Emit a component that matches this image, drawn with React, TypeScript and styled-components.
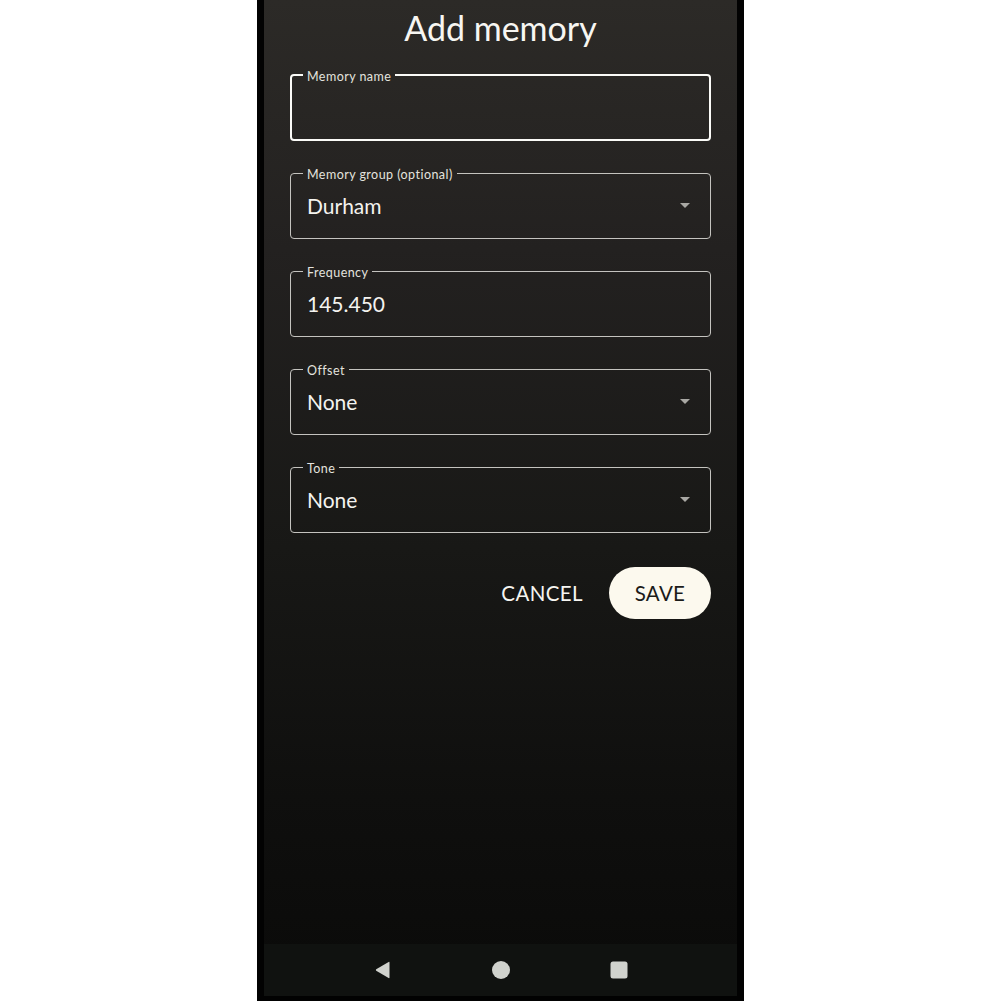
import styled, { createGlobalStyle } from 'styled-components'

const GlobalStyle = createGlobalStyle`
  html, body {
    margin: 0;
    padding: 0;
    background: #ffffff;
  }
  body {
    font-family: Lato, 'Noto Sans', sans-serif;
  }
`

const Page = styled.div`
  width: 1001px;
  height: 1001px;
  overflow: hidden;
  background: #ffffff;
`

const Phone = styled.div`
  margin-left: 257px;
  width: 487px;
  height: 1001px;
  box-sizing: border-box;
  padding: 0 7px 5px 7px;
  background: #020202;
  display: flex;
`

const Screen = styled.div`
  flex: 1;
  display: flex;
  flex-direction: column;
  background: linear-gradient(180deg, #2c2a27 0%, #232120 25%, #181816 55%, #0f0f0e 80%, #0a0a09 100%);
`

const Content = styled.div`
  flex: 1;
  display: flex;
  flex-direction: column;
  padding: 0 26px;
`

const Title = styled.h1`
  margin: 0;
  height: 66px;
  padding-top: 6px;
  box-sizing: border-box;
  font-size: 34px;
  line-height: 44px;
  font-weight: 400;
  text-align: center;
  color: #f7f6f2;
`

const Form = styled.div`
  display: flex;
  flex-direction: column;
  gap: 23px;
`

const Field = styled.fieldset<{ $focused?: boolean }>`
  margin: 0;
  padding: 0 26px 0 12px;
  min-width: 0;
  height: 75px;
  box-sizing: border-box;
  border: ${({ $focused }) => ($focused ? '2px solid #fbfbf8' : '1px solid #c4c3bf')};
  border-radius: 4px;
  padding-left: ${({ $focused }) => ($focused ? '11px' : '12px')};
`

const Legend = styled.legend`
  padding: 4px 4px 0 4px;
  font-size: 12.5px;
  line-height: 14px;
  letter-spacing: 0.45px;
  color: #e4e3df;
`

const ValueRow = styled.div`
  height: 46px;
  padding-left: 4px;
  display: flex;
  align-items: center;
  justify-content: space-between;
`

const Value = styled.span`
  font-size: 21px;
  color: #f4f3ef;
`

const Caret = styled.span`
  width: 0;
  height: 0;
  border-left: 5px solid transparent;
  border-right: 5px solid transparent;
  border-top: 5px solid #a9a8a4;
  margin-right: -6px;
`

const Actions = styled.div`
  margin-top: 34px;
  display: flex;
  justify-content: flex-end;
  align-items: center;
  gap: 26px;
`

const TextButton = styled.button`
  background: none;
  border: none;
  padding: 0;
  font-family: inherit;
  font-size: 20.5px;
  letter-spacing: 0.4px;
  color: #f6f5f1;
`

const PillButton = styled.button`
  width: 102px;
  height: 52px;
  border: none;
  border-radius: 26px;
  background: #fcf9ee;
  font-family: inherit;
  font-size: 20.5px;
  letter-spacing: 0.3px;
  color: #1b1b19;
`

const NavBar = styled.div`
  height: 52px;
  background: #101210;
  display: flex;
  align-items: center;
  justify-content: center;
  gap: 100px;
`

const NavIcon = styled.svg`
  width: 18px;
  height: 18px;
  fill: #d0d2cd;
`

const fields = [
  { label: 'Memory name', value: '', select: false, focused: true },
  { label: 'Memory group (optional)', value: 'Durham', select: true },
  { label: 'Frequency', value: '145.450', select: false },
  { label: 'Offset', value: 'None', select: true },
  { label: 'Tone', value: 'None', select: true },
]

export default function App() {
  return (
    <Page>
      <GlobalStyle />
      <Phone>
        <Screen>
          <Content>
            <Title>Add memory</Title>
            <Form>
              {fields.map((f) => (
                <Field key={f.label} $focused={f.focused}>
                  <Legend>{f.label}</Legend>
                  <ValueRow>
                    <Value>{f.value}</Value>
                    {f.select && <Caret />}
                  </ValueRow>
                </Field>
              ))}
            </Form>
            <Actions>
              <TextButton>CANCEL</TextButton>
              <PillButton>SAVE</PillButton>
            </Actions>
          </Content>
          <NavBar>
            <NavIcon viewBox="0 0 18 18">
              <path d="M15.5 1.5 L15.5 16.5 Q15.5 17.5 14.6 17 L2.2 9.8 Q1.4 9 2.2 8.2 L14.6 1 Q15.5 0.5 15.5 1.5 Z" />
            </NavIcon>
            <NavIcon viewBox="0 0 18 18">
              <circle cx="9" cy="9" r="9" />
            </NavIcon>
            <NavIcon viewBox="0 0 18 18">
              <rect x="0.5" y="0.5" width="17" height="17" rx="2.5" />
            </NavIcon>
          </NavBar>
        </Screen>
      </Phone>
    </Page>
  )
}
